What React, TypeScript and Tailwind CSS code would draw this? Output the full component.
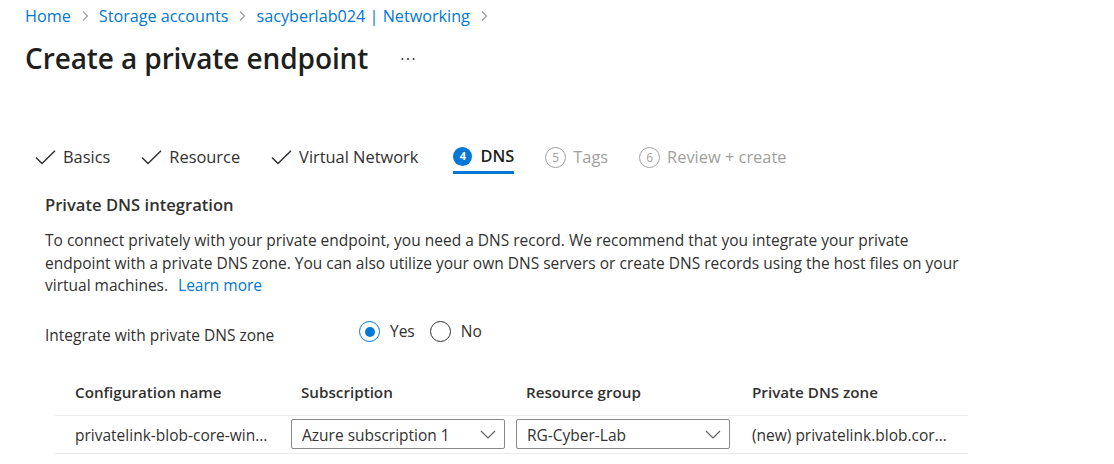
import React from "react";

const font = { fontFamily: '"Open Sans", "Noto Sans", sans-serif' };

function Crumb() {
  return (
    <svg width="8" height="12" viewBox="0 0 8 12" className="mx-[10px]">
      <path d="M2 1.5 L6.5 6 L2 10.5" fill="none" stroke="#a19f9d" strokeWidth="1.2" />
    </svg>
  );
}

function Check() {
  return (
    <svg width="21" height="15" viewBox="0 0 21 15" className="mr-[7px]">
      <path d="M1 7.5 L7 13.5 L20 0.8" fill="none" stroke="#323130" strokeWidth="1.5" />
    </svg>
  );
}

function Num({ n, active }: { n: string; active?: boolean }) {
  if (active) {
    return (
      <span className="mr-[8px] flex h-[19px] w-[19px] items-center justify-center rounded-full bg-[#0078d4] text-[11px] font-bold text-white">
        {n}
      </span>
    );
  }
  return (
    <span className="mr-[7px] flex h-[21px] w-[21px] items-center justify-center rounded-full border border-[#a19f9d] text-[12px] text-[#a19f9d]">
      {n}
    </span>
  );
}

function Down() {
  return (
    <svg width="16" height="9" viewBox="0 0 16 9">
      <path d="M1 1 L8 8 L15 1" fill="none" stroke="#605e5c" strokeWidth="1.1" />
    </svg>
  );
}

export default function App() {
  return (
    <div className="h-[464px] w-full overflow-hidden bg-white text-[#323130]" style={font}>
      {/* breadcrumb */}
      <div className="flex h-[32px] items-center pl-[25px] text-[16.2px] text-[#0078d4]">
        <span>Home</span>
        <Crumb />
        <span>Storage accounts</span>
        <Crumb />
        <span>sacyberlab024 | Networking</span>
        <Crumb />
      </div>
      {/* title */}
      <div className="flex h-[52px] items-center pl-[25px]">
        <h1 className="text-[28px] font-semibold tracking-[-0.1px] text-[#201f1e]">Create a private endpoint</h1>
        <svg width="14" height="4" viewBox="0 0 14 4" className="ml-[33px] mt-[2px]">
          <circle cx="1.5" cy="2" r="1" fill="#323130" />
          <circle cx="7" cy="2" r="1" fill="#323130" />
          <circle cx="12.5" cy="2" r="1" fill="#323130" />
        </svg>
      </div>
      {/* tabs */}
      <div className="mt-[56px] flex h-[34px] items-stretch gap-[31px] pl-[35px] text-[16.4px]">
        <div className="flex items-center pt-[1px]">
          <Check />
          <span>Basics</span>
        </div>
        <div className="flex items-center pt-[1px]">
          <Check />
          <span>Resource</span>
        </div>
        <div className="flex items-center pt-[1px]">
          <Check />
          <span>Virtual Network</span>
        </div>
        <div className="ml-[4px] flex items-center border-b-[3px] border-[#0078d4] pt-[2px]">
          <Num n="4" active />
          <span className="font-semibold text-[#201f1e]">DNS</span>
        </div>
        <div className="flex items-center pt-[1px] text-[#a19f9d]">
          <Num n="5" />
          <span>Tags</span>
        </div>
        <div className="flex items-center pt-[1px] text-[#a19f9d]">
          <Num n="6" />
          <span>Review + create</span>
        </div>
      </div>
      {/* content */}
      <div className="pl-[45px]">
        <div className="mt-[19px] flex h-[24px] items-center pt-[1px] text-[16.6px] font-semibold">Private DNS integration</div>
        <p className="mt-[12px] text-[15.5px] leading-[22.5px]">
          To connect privately with your private endpoint, you need a DNS record. We recommend that you integrate your private
          <br />
          endpoint with a private DNS zone. You can also utilize your own DNS servers or create DNS records using the host files on your
          <br />
          virtual machines.
          <a className="ml-[10px] text-[#0078d4]">Learn more</a>
        </p>
        <div className="mt-[24px] flex h-[24px] items-start">
          <div className="mt-[2px] w-[314px] text-[15.5px] leading-[24px]">Integrate with private DNS zone</div>
          <div className="flex h-[22px] items-center text-[15.5px]">
            <span className="flex h-[21px] w-[21px] items-center justify-center rounded-full border border-[#0078d4]">
              <span className="h-[10px] w-[10px] rounded-full bg-[#0078d4]" />
            </span>
            <span className="ml-[10px]">Yes</span>
            <span className="ml-[15px] h-[21px] w-[21px] rounded-full border border-[#323130]" />
            <span className="ml-[10px]">No</span>
          </div>
        </div>
      </div>
      {/* table */}
      <div className="ml-[55px] mt-[25px] w-[913px] text-[15.5px]">
        <div className="grid h-[46px] grid-cols-[226px_225px_226px_236px] items-center border-b border-[#edebe9] text-[15.2px] font-semibold">
          <div className="pl-[20px] pt-[1px]">Configuration name</div>
          <div className="pl-[20px] pt-[1px]">Subscription</div>
          <div className="pl-[20px] pt-[1px]">Resource group</div>
          <div className="pl-[20px] pt-[1px]">Private DNS zone</div>
        </div>
        <div className="grid h-[38px] grid-cols-[226px_225px_226px_236px] items-center border-b border-[#edebe9]">
          <div className="whitespace-nowrap pl-[20px] pt-[3px]">privatelink-blob-core-win...</div>
          <div className="pl-[10px]">
            <div className="flex h-[30px] w-[214px] items-center justify-between rounded-[2px] border border-[#8a8886] pl-[10px] pr-[8px]">
              <span className="pt-[3px]">Azure subscription 1</span>
              <Down />
            </div>
          </div>
          <div className="pl-[10px]">
            <div className="flex h-[30px] w-[214px] items-center justify-between rounded-[2px] border border-[#8a8886] pl-[10px] pr-[8px]">
              <span className="pt-[3px]">RG-Cyber-Lab</span>
              <Down />
            </div>
          </div>
          <div className="whitespace-nowrap pl-[20px] pt-[3px]">(new) privatelink.blob.cor...</div>
        </div>
      </div>
    </div>
  );
}
